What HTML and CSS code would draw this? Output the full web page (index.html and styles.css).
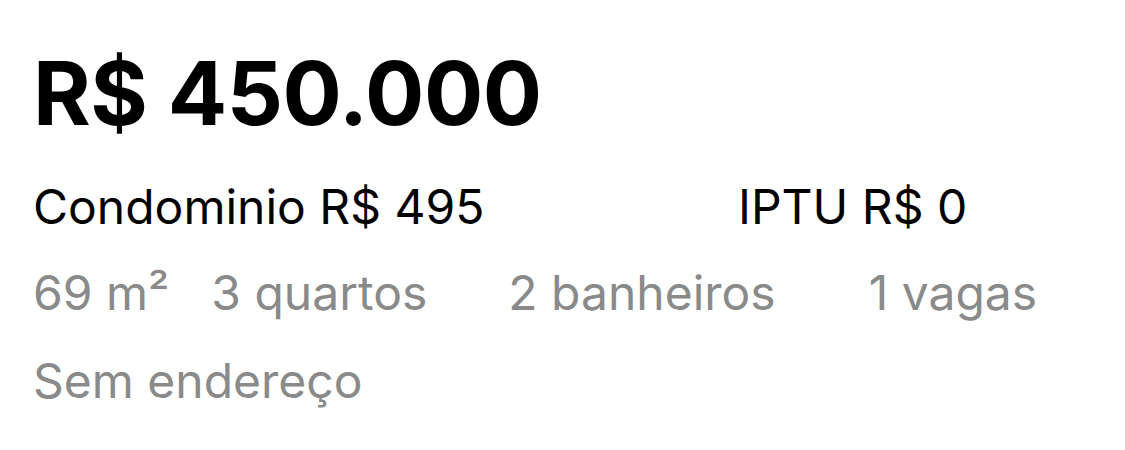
FILE: index.html
```html
<!DOCTYPE html>
<html lang="pt-BR">
<head>
<meta charset="utf-8">
<link rel="stylesheet" href="styles.css">
</head>
<body>
<main class="card">
  <div class="price">R$ 450.000</div>
  <div class="fees">
    <span class="fee fee-condo">Condominio R$ 495</span>
    <span class="fee">IPTU R$ 0</span>
  </div>
  <div class="specs">
    <span class="spec spec-area">69 m²</span>
    <span class="spec spec-rooms">3 quartos</span>
    <span class="spec spec-baths">2 banheiros</span>
    <span class="spec">1 vagas</span>
  </div>
  <div class="address">Sem endereço</div>
</main>
</body>
</html>
```

FILE: styles.css
```css
html, body {
  margin: 0;
  padding: 0;
  background: #ffffff;
}
body {
  font-family: Inter, "Noto Sans", "Liberation Sans", sans-serif;
  width: 1125px;
  height: 450px;
  overflow: hidden;
}
.card {
  padding: 43px 0 0 33px;
  display: flex;
  flex-direction: column;
}
.price {
  font-size: 88px;
  font-weight: 700;
  line-height: 100px;
  color: #000;
  letter-spacing: -0.5px;
}
.fees {
  margin-top: 36px;
  display: flex;
  font-size: 48px;
  line-height: 56px;
  color: #000;
}
.fee-condo {
  width: 705px;
}
.specs {
  margin-top: 30px;
  display: flex;
  font-size: 48px;
  line-height: 56px;
  color: #8a8a8a;
}
.spec-area { margin-right: 42px; }
.spec-rooms { margin-right: 81px; }
.spec-baths { margin-right: 93px; }
.address {
  margin-top: 32px;
  font-size: 48px;
  line-height: 56px;
  color: #8a8a8a;
}
```
